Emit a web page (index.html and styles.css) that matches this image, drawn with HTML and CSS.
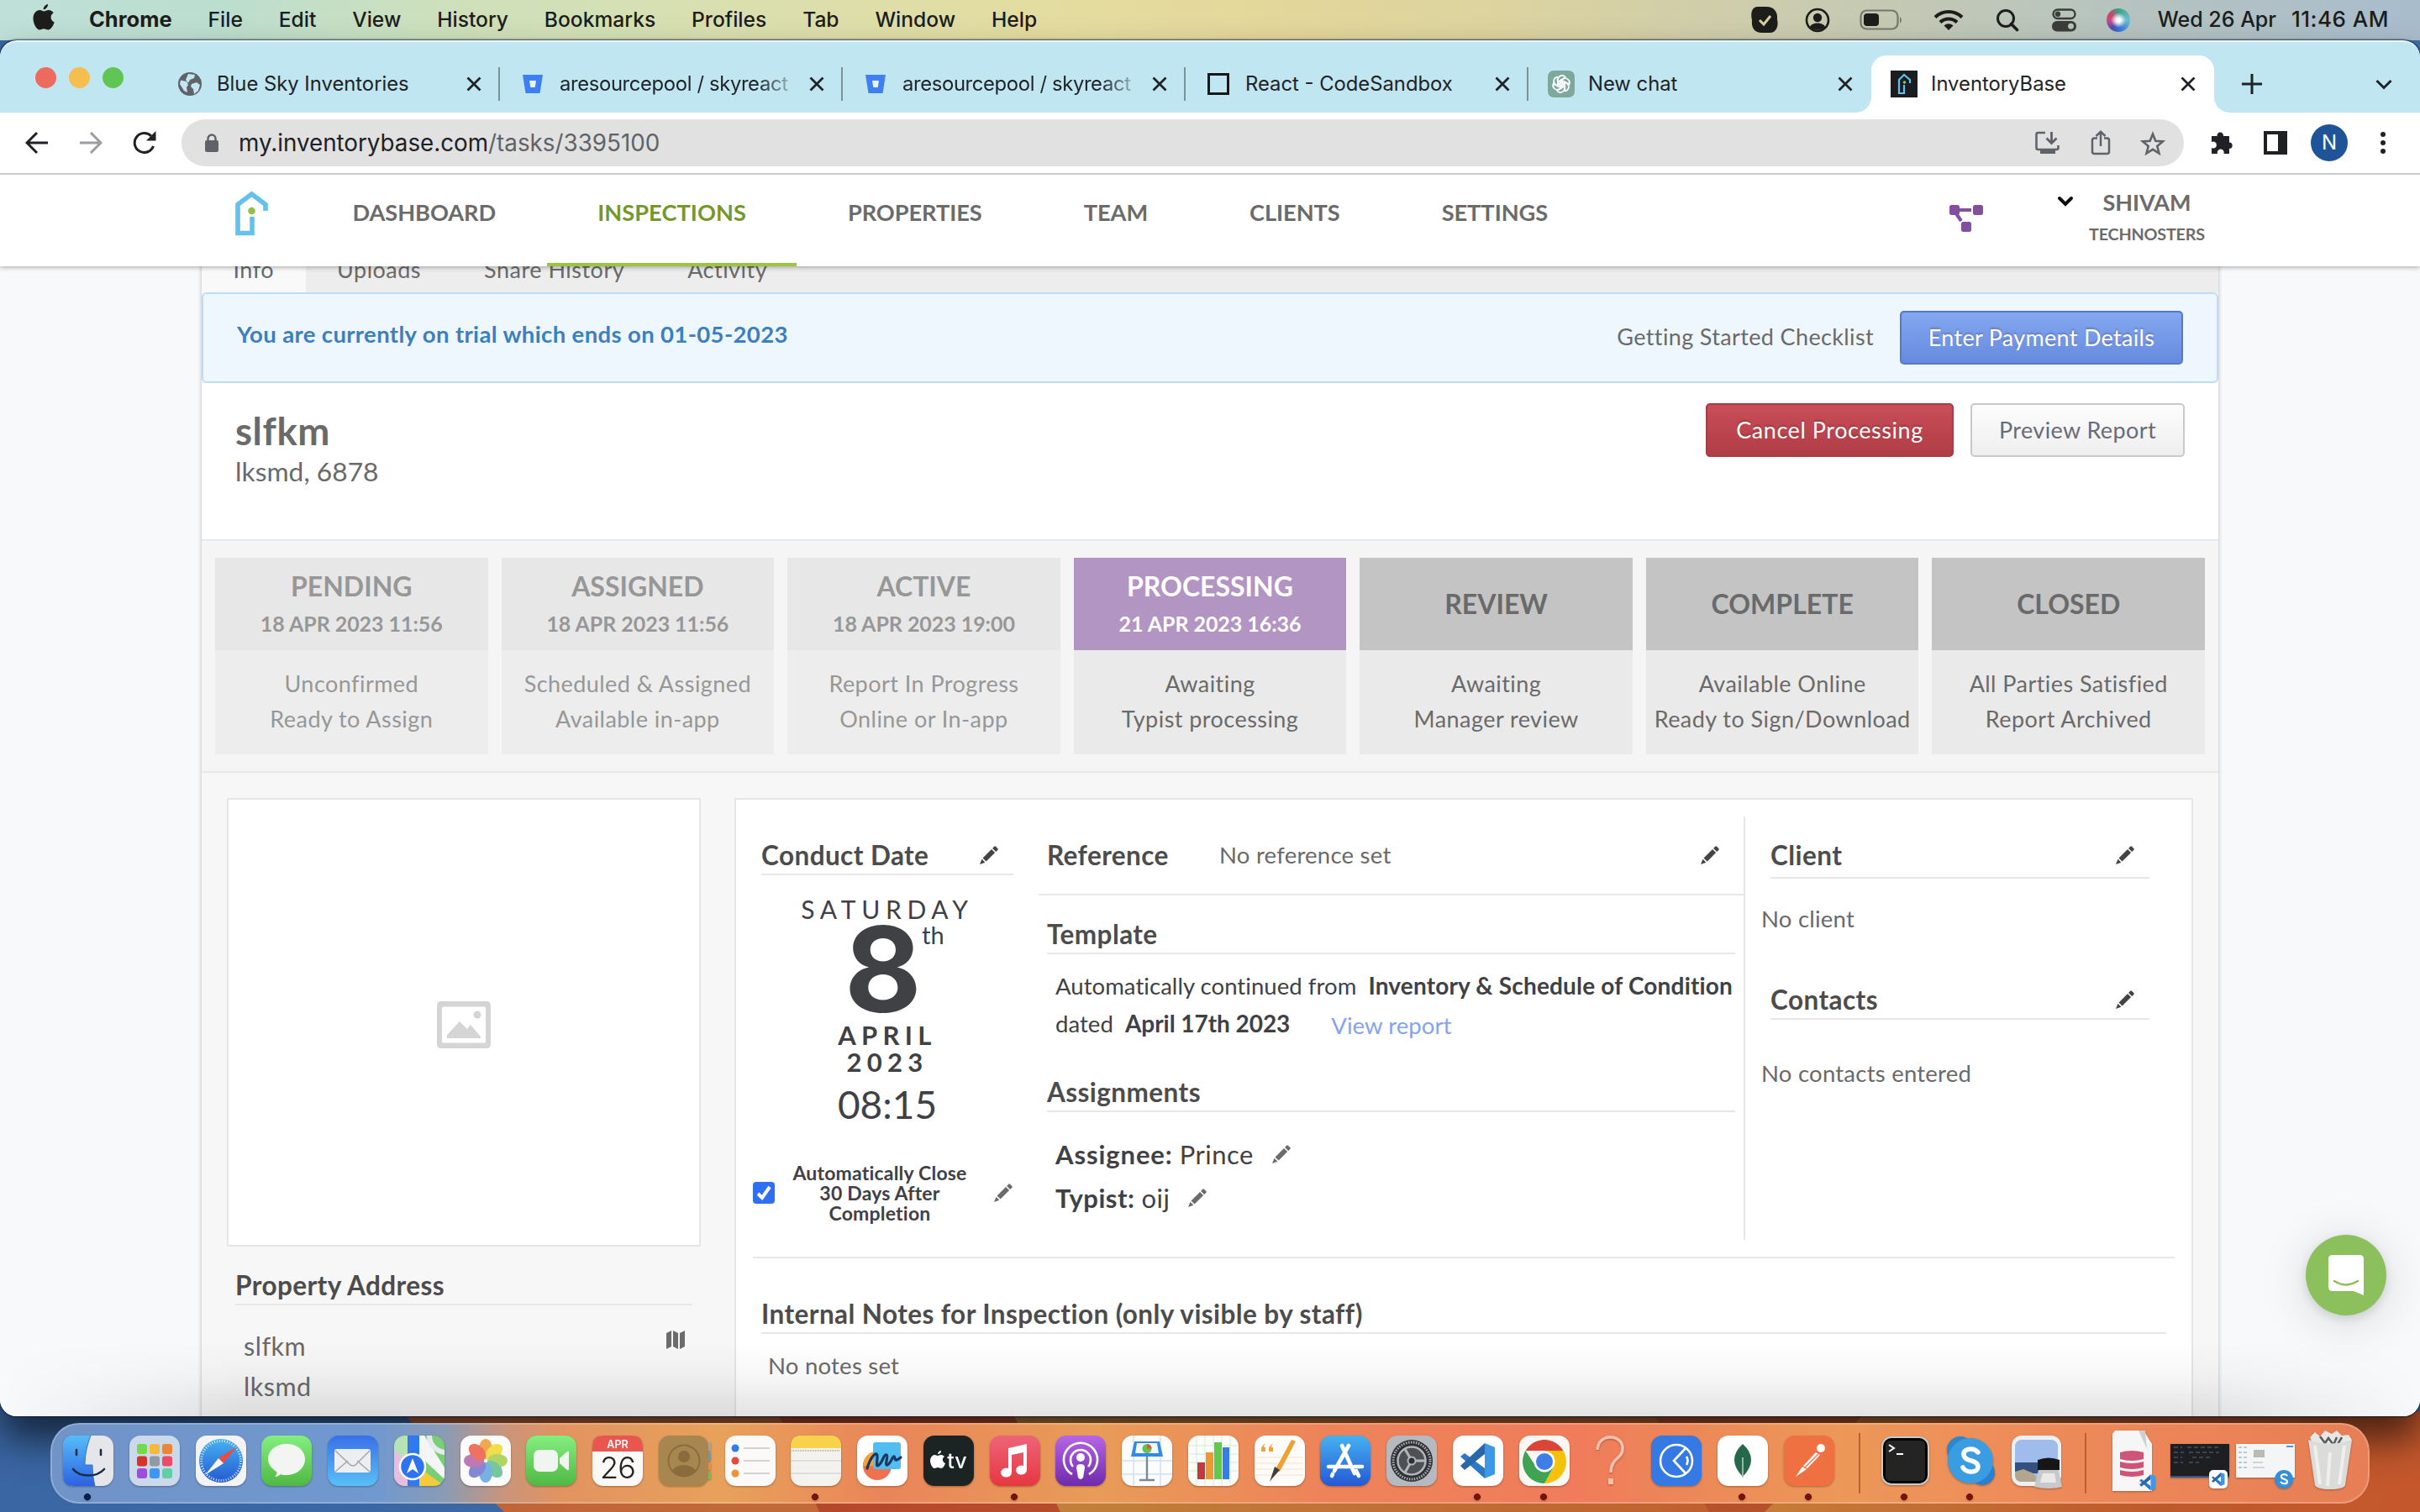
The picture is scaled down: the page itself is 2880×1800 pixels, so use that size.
FILE: index.html
```html
<!DOCTYPE html>
<html lang="en">
<head>
<meta charset="utf-8">
<title>InventoryBase</title>
<link rel="stylesheet" href="styles.css">
</head>
<body>
<svg class="wallpaper" viewBox="0 0 2880 1800" preserveAspectRatio="none">
  <defs>
    <linearGradient id="w1"><stop offset="0" stop-color="#c06338"/><stop offset="1" stop-color="#c88a3e"/></linearGradient>
    <linearGradient id="w2"><stop offset="0" stop-color="#b5472a"/><stop offset="1" stop-color="#bf6430"/></linearGradient>
    <linearGradient id="w3"><stop offset="0" stop-color="#c1823c"/><stop offset=".6" stop-color="#bf5a2c"/><stop offset="1" stop-color="#b03a22"/></linearGradient>
    <linearGradient id="w4"><stop offset="0" stop-color="#c67c39"/><stop offset=".6" stop-color="#bd5a2c"/><stop offset="1" stop-color="#c4582c"/></linearGradient>
    <linearGradient id="wb"><stop offset="0" stop-color="#3a66a3"/><stop offset="1" stop-color="#4170a6"/></linearGradient>
  </defs>
  <rect width="2880" height="1800" fill="url(#wb)"/>
  <rect x="635" width="1600" height="60" fill="#d19a45"/>
  <path d="M480 1680L490 1694L600 1800H2880V1680z" fill="url(#w1)"/>
  <path d="M925 1680L975 1800H2880V1680z" fill="url(#w2)"/>
  <path d="M1204 1680L1262 1800H2880V1680z" fill="url(#w3)"/>
  <path d="M1966 1680L2034 1800H2880V1680z" fill="#b5512b"/>
  <path d="M2222 1680L2100 1800H2880V1680z" fill="url(#w4)"/>
</svg>

<header class="menubar">
  <svg class="apple" width="28" height="32" viewBox="0 0 28 32"><path d="M19 0c.3 3-2.400 6.300-5.300 6.300C13.300 3.500 16 .4 19 0z" /><path d="M14.300 8.600c1.300 0 3-1.500 5.700-1.500 2.300 0 4.500 1.300 5.700 3.200-4.600 2.700-3.900 9.200 1 11.200-1.400 4.200-4.400 9-7.300 9-2 0-2.700-1.300-5.200-1.300s-3.300 1.300-5.200 1.300C5.800 30.500 1.500 23.500 1.500 17c0-6.200 3.900-9.900 7.700-9.900 2.400 0 3.900 1.500 5.100 1.500z"/></svg>
  <nav class="menu"><b>Chrome</b><span>File</span><span>Edit</span><span>View</span><span>History</span><span>Bookmarks</span><span>Profiles</span><span>Tab</span><span>Window</span><span>Help</span></nav>
  <div class="status">
    <svg width="34" height="34" viewBox="0 0 34 34"><path d="M9 1h10c9 0 14 6 13 15 2 8-1 16-9 16H14C5 32 1 26 2 17 0 8 2 1 9 1z"/><path d="M11 17l5 5 8-10" fill="none" stroke="#d6d0a4" stroke-width="3"/></svg>
    <svg width="30" height="30" viewBox="0 0 30 30"><circle cx="15" cy="15" r="13" fill="none" stroke="#1d1d18" stroke-width="2.600"/><circle cx="15" cy="12" r="5.200"/><path d="M6 23c2-6 16-6 18 0-4 5-14 5-18 0z"/></svg>
    <svg width="52" height="26" viewBox="0 0 52 26"><rect x="1.500" y="1.500" width="44" height="22" rx="7" fill="none" stroke="#77776a" stroke-width="2.200"/><rect x="5" y="5" width="18" height="15" rx="4"/><path d="M48 9q4 3.500 0 8z" fill="#77776a"/></svg>
    <svg width="36" height="26" viewBox="0 0 36 26"><g fill="none" stroke="#1d1d1b" stroke-width="4.200"><path d="M2 9.500a23 23 0 0 1 32 0"/><path d="M8 15.500a14.500 14.500 0 0 1 20 0"/></g><path d="M18 25l-5.500-5.500a8 8 0 0 1 11 0z"/></svg>
    <svg width="28" height="28" viewBox="0 0 28 28"><g fill="none" stroke="#1d1d1b" stroke-width="3"><circle cx="12" cy="12" r="9.500"/><path d="M18.500 18.500l7 7" stroke-width="3.600" stroke-linecap="round"/></g></svg>
    <svg width="30" height="28" viewBox="0 0 30 28"><rect x="1.500" y="1.500" width="26" height="10.500" rx="5.200" fill="none" stroke="#3b3d39" stroke-width="2.400"/><circle cx="7" cy="6.800" r="3.200" fill="#3b3d39"/><rect x="0" y="15" width="29" height="12.500" rx="6" fill="#3b3d39"/><circle cx="22.500" cy="21.200" r="3.400" fill="#b8c3bb"/></svg>
    <i class="siri"></i>
    <span class="day">Wed 26 Apr</span><span class="clock">11:46 AM</span>
  </div>
</header>

<main class="window">
  <div class="tabstrip">
    <div class="lights"><i class="red"></i><i class="amber"></i><i class="green"></i></div>
    <div class="tab"><svg width="28" height="28" viewBox="0 0 28 28"><circle cx="14" cy="14" r="14" fill="#5f6368"/><path d="M3 9.500l7 1.500 2 4-2 3 1 6-4-2-5-8zM12 2l8 1-1 4-5 2-2 4-3-4zM16 14l6-2 4 3-2 7-5 4-1-6-3-3z" fill="#c3e7f1"/></svg><span>Blue Sky Inventories</span><svg class="x"><use href="#x"/></svg></div>
    <div class="tab"><svg width="26" height="24" viewBox="0 0 26 24"><path d="M1 1h24l-3.500 22h-17z" fill="#3e80f0"/><path d="M9 8h8l-1.300 8h-5.400z" fill="#e9f3fd"/></svg><span class="fade">aresourcepool / skyreact</span><svg class="x"><use href="#x"/></svg></div>
    <div class="tab"><svg width="26" height="24" viewBox="0 0 26 24"><path d="M1 1h24l-3.500 22h-17z" fill="#3e80f0"/><path d="M9 8h8l-1.300 8h-5.400z" fill="#e9f3fd"/></svg><span class="fade">aresourcepool / skyreact</span><svg class="x"><use href="#x"/></svg></div>
    <div class="tab"><svg width="26" height="26" viewBox="0 0 26 26"><rect x="1.500" y="1.500" width="23" height="23" fill="none" stroke="#15181b" stroke-width="3"/></svg><span>React - CodeSandbox</span><svg class="x"><use href="#x"/></svg></div>
    <div class="tab"><svg width="32" height="32" viewBox="0 0 32 32"><rect width="32" height="32" rx="7" fill="#7da99a"/><g fill="none" stroke="#fff" stroke-width="1.700" stroke-linejoin="round"><path id="petal" d="M12 19V10.500a5 5 0 0 1 9-2.500L14.500 12v6"/><use href="#petal" transform="rotate(60 16 16)"/><use href="#petal" transform="rotate(120 16 16)"/><use href="#petal" transform="rotate(180 16 16)"/><use href="#petal" transform="rotate(240 16 16)"/><use href="#petal" transform="rotate(300 16 16)"/></g></svg><span>New chat</span><svg class="x"><use href="#x"/></svg></div>
    <div class="tab active"><svg width="32" height="32" viewBox="0 0 32 32"><rect width="32" height="32" fill="#1b1d20"/><path d="M23 15v-4l-7-6-6 6v16h6V17" fill="none" stroke="#5dc0f0" stroke-width="2.200"/><circle cx="16.500" cy="14" r="1.800" fill="#9c3"/></svg><span>InventoryBase</span><svg class="x"><use href="#x"/></svg></div>
    <svg class="plus" width="24" height="24" viewBox="0 0 24 24"><path d="M12 0v24M0 12h24" stroke="#1f2327" stroke-width="3"/></svg>
    <svg class="more" width="20" height="14" viewBox="0 0 20 14"><path d="M1.500 2l8.500 8.500L18.500 2" fill="none" stroke="#1f2327" stroke-width="3"/></svg>
  </div>

  <div class="toolbar">
    <svg width="28" height="28" viewBox="0 0 28 28"><path d="M27 14H3M14 2L2 14l12 12" fill="none" stroke="#202124" stroke-width="3"/></svg>
    <svg width="28" height="28" viewBox="0 0 28 28"><path d="M1 14h24M14 2l12 12-12 12" fill="none" stroke="#9a9c9f" stroke-width="3"/></svg>
    <svg width="28" height="28" viewBox="0 0 28 28"><path d="M24.500 18A11.500 11.500 0 1 1 22 6" fill="none" stroke="#202124" stroke-width="3"/><path d="M27.500 0v11.500H16z" fill="#202124"/></svg>
    <div class="omnibox">
      <svg width="18" height="22" viewBox="0 0 18 22"><rect x="1" y="8" width="16" height="14" rx="2" fill="#5f6368"/><path d="M4.500 9V6a4.500 4.500 0 0 1 9 0v3" fill="none" stroke="#5f6368" stroke-width="2.400"/></svg>
      <p><span class="host">my.inventorybase.com</span><span class="path">/tasks/3395100</span></p>
      <div class="actions">
        <svg width="30" height="28" viewBox="0 0 30 28"><path d="M12 2H3.500Q1.500 2 1.500 4v16q0 2 2 2h22q2 0 2-2v-3" fill="none" stroke="#5f6368" stroke-width="2.600"/><path d="M19.500 1v13M13.500 8.500l6 6 6-6" fill="none" stroke="#5f6368" stroke-width="2.800"/><path d="M6 22h18v5H6z" fill="#5f6368"/></svg>
        <svg width="24" height="30" viewBox="0 0 24 30"><path d="M8 9.500H4.500q-2.500 0-2.500 2.500v13.500Q2 28 4.500 28h15q2.500 0 2.500-2.500V12q0-2.500-2.500-2.500H16M12 19V2M6.500 7L12 1.800 17.500 7" fill="none" stroke="#5f6368" stroke-width="2.500"/></svg>
        <svg width="30" height="29" viewBox="0 0 30 29"><path d="M15 3.500l3.300 8.300 8.700.6-6.700 5.600 2.200 8.500L15 21.800l-7.500 4.700L9.700 18 3 12.400l8.700-.6z" fill="none" stroke="#5f6368" stroke-width="2.600"/></svg>
      </div>
    </div>
    <svg width="30" height="30" viewBox="0 0 30 30"><path d="M3 7h6.500a3.800 3.800 0 1 1 7.500 0H24v7.500a3.600 3.600 0 1 1 0 7.300V28h-6.500a4 4 0 1 0-7.500 0H3v-7a4 4 0 1 0 0-7z" fill="#202124"/></svg>
    <svg width="28" height="28" viewBox="0 0 28 28"><path fill-rule="evenodd" d="M0 0h28v28H0zM4 4v20h13V4z" fill="#202124"/></svg>
    <span class="avatar">N</span>
    <svg width="8" height="28" viewBox="0 0 8 28"><g fill="#202124"><circle cx="4" cy="4" r="3"/><circle cx="4" cy="14" r="3"/><circle cx="4" cy="24" r="3"/></g></svg>
  </div>

  <div class="app">
    <div class="topnav">
      <svg class="logo" width="40" height="54" viewBox="0 0 40 54"><path d="M36 24V16.500L19.500 4 3 16.500V50.500H20V31" fill="none" stroke="#66c1ea" stroke-width="5.600"/><circle cx="19.500" cy="24" r="4.300" fill="#94c03d"/></svg>
      <nav><a>DASHBOARD</a><a class="on">INSPECTIONS</a><a>PROPERTIES</a><a>TEAM</a><a>CLIENTS</a><a>SETTINGS</a></nav>
      <svg class="flow" width="40" height="32" viewBox="0 0 40 32"><g fill="#844fa0"><rect width="12" height="12" rx="2.500"/><rect x="28" width="12" height="12" rx="2.500"/><rect x="14" y="20" width="12" height="12" rx="2.500"/></g><path d="M11 6h15M8.500 11l5.500 8" stroke="#844fa0" stroke-width="4"/></svg>
      <svg class="caret" width="20" height="14" viewBox="0 0 20 14"><path d="M3 3l7 7 7-7" fill="none" stroke="#0c0c0c" stroke-width="4" stroke-linecap="round"/></svg>
      <div class="user"><b>SHIVAM</b><span>TECHNOSTERS</span></div>
    </div>

    <div class="sheet">
      <div class="subtabs"><a class="on">Info</a><a>Uploads</a><a>Share History</a><a>Activity</a></div>
      <div class="trial"><b>You are currently on trial which ends on 01-05-2023</b><span>Getting Started Checklist</span><a class="btn blue">Enter Payment Details</a></div>
      <div class="title">
        <div><h1>slfkm</h1><p>lksmd, 6878</p></div>
        <a class="btn danger">Cancel Processing</a><a class="btn plain">Preview Report</a>
      </div>
      <div class="steps">
        <div class="step done"><h3>PENDING<small>18 APR 2023 11:56</small></h3><p>Unconfirmed<br>Ready to Assign</p></div>
        <div class="step done"><h3>ASSIGNED<small>18 APR 2023 11:56</small></h3><p>Scheduled &amp; Assigned<br>Available in-app</p></div>
        <div class="step done"><h3>ACTIVE<small>18 APR 2023 19:00</small></h3><p>Report In Progress<br>Online or In-app</p></div>
        <div class="step now"><h3>PROCESSING<small>21 APR 2023 16:36</small></h3><p>Awaiting<br>Typist processing</p></div>
        <div class="step"><h3>REVIEW</h3><p>Awaiting<br>Manager review</p></div>
        <div class="step"><h3>COMPLETE</h3><p>Available Online<br>Ready to Sign/Download</p></div>
        <div class="step"><h3>CLOSED</h3><p>All Parties Satisfied<br>Report Archived</p></div>
      </div>

      <div class="content">
        <aside>
          <div class="photo"><svg width="64" height="56" viewBox="0 0 64 56"><path fill-rule="evenodd" fill="#d5d5d5" d="M5 0h54q5 0 5 5v46q0 5-5 5H5q-5 0-5-5V5q0-5 5-5zM7.500 6.500q-1.500 0-1.500 1.500v40q0 1.500 1.500 1.500h49q1.500 0 1.500-1.500V8q0-1.500-1.500-1.500z"/><circle cx="48" cy="16" r="4.500" fill="#d5d5d5"/><path d="M12 44v-4l15-16 9 9 4-5 12 14v2z" fill="#d5d5d5"/></svg></div>
          <div class="address"><h2>Property Address</h2>
            <div class="lines"><p>slfkm<br>lksmd</p><svg width="22" height="22" viewBox="0 0 22 22"><path d="M0 3l6-3v19l-6 3zM8 0l6 3v19l-6-3zM16 3l6-3v19l-6 3z" fill="#6b6b6b"/></svg></div>
          </div>
        </aside>
        <section class="panel">
          <div class="cols">
            <div class="when">
              <h2>Conduct Date <svg class="pen"><use href="#pen"/></svg></h2>
              <div class="date"><span class="wd">SATURDAY</span><span class="dd">8<sup>th</sup></span><span class="mm">APRIL</span><span class="mm">2023</span><span class="tt">08:15</span></div>
              <div class="auto"><i class="check"><svg width="26" height="26" viewBox="0 0 26 26"><path d="M6 14l5 5 9-13" fill="none" stroke="#fff" stroke-width="4"/></svg></i><p>Automatically Close<br>30 Days After<br>Completion</p><svg class="pen soft"><use href="#pen"/></svg></div>
            </div>
            <div class="what">
              <div class="ref"><h2>Reference</h2><p>No reference set</p><svg class="pen"><use href="#pen"/></svg></div>
              <div class="inner">
                <h2 class="tpl">Template</h2>
                <p class="para">Automatically continued from <b class="inv">Inventory &amp; Schedule of Condition</b><br>dated <b class="apr">April 17th 2023</b><a>View report</a></p>
                <h2>Assignments</h2>
                <div class="people"><p><b class="as">Assignee:</b> Prince <svg class="pen mid"><use href="#pen"/></svg></p><p><b>Typist:</b> oij <svg class="pen mid"><use href="#pen"/></svg></p></div>
              </div>
            </div>
            <div class="who">
              <h2 class="cl">Client <svg class="pen"><use href="#pen"/></svg></h2><p class="cp">No client</p>
              <h2>Contacts <svg class="pen"><use href="#pen"/></svg></h2><p class="kp">No contacts entered</p>
            </div>
          </div>
          <div class="notes"><h2>Internal Notes for Inspection (only visible by staff)</h2><p>No notes set</p></div>
        </section>
      </div>
    </div>
    <div class="shade"></div>
    <div class="chat"><svg width="42" height="48" viewBox="0 0 42 48"><path d="M5 0h32q5 0 5 5v43l-12-5H5q-5 0-5-5V5q0-5 5-5z" fill="#fff"/><path d="M7 31q14 9 28 0" fill="none" stroke="#8cc05d" stroke-width="2.600" stroke-linecap="round"/></svg></div>
  </div>
</main>

<footer class="dock">
  <svg class="run" viewBox="0 0 60 60"><rect width="60" height="60" rx="13" fill="#e4e6ea"/><path d="M13 0h20c-4 10-7 22-7 35h9c0 9 1 17 3 25H13Q0 60 0 47V13Q0 0 13 0z" fill="url(#fb)"/><path d="M33 0c-4 10-7 22-7 35h9c0 9 1 17 3 25" fill="none" stroke="#3a6fb8" stroke-width="1"/><path d="M16 17v6M45 17v6M12 40c8 10 28 10 37 0" fill="none" stroke="#1c2b44" stroke-width="2.600" stroke-linecap="round"/></svg>
  <svg viewBox="0 0 60 60"><rect width="60" height="60" rx="13" fill="#ccd9ea"/><g><rect x="9" y="10" width="12" height="12" rx="3" fill="#72d84c"/><rect x="24" y="10" width="12" height="12" rx="3" fill="#f6b93c"/><rect x="39" y="10" width="12" height="12" rx="3" fill="#ec8632"/><rect x="9" y="24.500" width="12" height="12" rx="3" fill="#d5332c"/><rect x="24" y="24.500" width="12" height="12" rx="3" fill="#8f9aa4"/><rect x="39" y="24.500" width="12" height="12" rx="3" fill="#ef4a63"/><rect x="9" y="39" width="12" height="12" rx="3" fill="#9b4ee0"/><rect x="24" y="39" width="12" height="12" rx="3" fill="#3b97f3"/><rect x="39" y="39" width="12" height="12" rx="3" fill="#5fcfa6"/></g></svg>
  <svg viewBox="0 0 60 60"><rect width="60" height="60" rx="13" fill="#f3f3f3"/><circle cx="30" cy="30" r="26" fill="url(#bl)"/><circle cx="30" cy="30" r="23.500" fill="none" stroke="#d8ecfb" stroke-width="3" stroke-dasharray="1 2"/><path d="M49 13L27 27l6 6z" fill="#ef4a3c"/><path d="M11 47l16-20 6 6z" fill="#f4f6f8"/></svg>
  <svg viewBox="0 0 60 60"><rect width="60" height="60" rx="13" fill="url(#gr)"/><path d="M30 10c13 0 22 8 22 18s-9 19-22 19c-3 0-5 0-7-1-2 2-4 3-7 3 2-2 3-4 2-6-6-4-10-9-10-15 0-10 9-18 22-18z" fill="#f2f5f1"/></svg>
  <svg viewBox="0 0 60 60"><rect width="60" height="60" rx="13" fill="url(#ml)"/><rect x="8" y="16" width="43" height="28" rx="3" fill="#eceff2"/><path d="M9 18l18 17q3 2 6 0l17-17M9 43l15-13M50 43L35 30" fill="none" stroke="#a5a9ad" stroke-width="1.600"/></svg>
  <svg viewBox="0 0 60 60"><clipPath id="mc"><rect width="60" height="60" rx="13"/></clipPath><g clip-path="url(#mc)"><rect width="60" height="60" fill="#79cf73"/><path d="M0 18l16 10v32H0z" fill="#dc86cb"/><path d="M30 0h6l24 38v14L28 22z" fill="#f4f6f5"/><path d="M0 0h16v60H0z" fill="#f4f6f5" opacity=".5"/><path d="M30 38l30 22H30z" fill="#f5ca3c"/><path d="M16 0h14v60H16z" fill="#2f7af0"/><circle cx="62" cy="0" r="20" fill="none" stroke="#e7e9ee" stroke-width="6"/></g><circle cx="22" cy="37" r="15" fill="#2d74ee" stroke="#fff" stroke-width="2.500"/><path d="M22 27l7 18-7-5-7 5z" fill="#fff"/></svg>
  <svg viewBox="0 0 60 60"><rect width="60" height="60" rx="13" fill="#fbfbfb"/><g opacity=".85"><ellipse cx="30" cy="16" rx="8" ry="12" fill="#f39a2e"/><ellipse cx="30" cy="16" rx="8" ry="12" fill="#efd92f" transform="rotate(45 30 30)"/><ellipse cx="30" cy="16" rx="8" ry="12" fill="#a5cf4a" transform="rotate(90 30 30)"/><ellipse cx="30" cy="16" rx="8" ry="12" fill="#5fbf8d" transform="rotate(135 30 30)"/><ellipse cx="30" cy="16" rx="8" ry="12" fill="#63a5e2" transform="rotate(180 30 30)"/><ellipse cx="30" cy="16" rx="8" ry="12" fill="#6f74cb" transform="rotate(225 30 30)"/><ellipse cx="30" cy="16" rx="8" ry="12" fill="#b263a8" transform="rotate(270 30 30)"/><ellipse cx="30" cy="16" rx="8" ry="12" fill="#ec5a48" transform="rotate(315 30 30)"/></g></svg>
  <svg viewBox="0 0 60 60"><rect width="60" height="60" rx="13" fill="url(#gr)"/><rect x="9" y="17" width="29" height="26" rx="7" fill="#f1f5ef"/><path d="M40 27l9-8q2-1 2 1v20q0 2-2 1l-9-8z" fill="#f1f5ef"/></svg>
  <svg viewBox="0 0 60 60"><rect width="60" height="60" rx="13" fill="#faf9f8"/><path d="M0 19v-6Q0 0 13 0h34q13 0 13 13v6z" fill="#e8564f"/><text x="30" y="15" class="cal1">APR</text><text x="30" y="51" class="cal2">26</text></svg>
  <svg viewBox="0 0 60 60"><path d="M50 8h12v10H50z" fill="#9aa5ad"/><path d="M50 20h12v10H50z" fill="#4da2d8"/><path d="M50 32h12v9H50z" fill="#ef8b34"/><path d="M50 43h12v9H50z" fill="#62c554"/><rect width="59" height="60" rx="13" fill="#a88650"/><circle cx="30" cy="30" r="18.500" fill="none" stroke="#8a6b3b" stroke-width="1.800"/><circle cx="30" cy="25" r="7" fill="#8a6b3b"/><path d="M16 42c4-9 24-9 28 0-7 9-21 9-28 0z" fill="#8a6b3b"/></svg>
  <svg viewBox="0 0 60 60"><rect width="60" height="60" rx="13" fill="#fbfaf9"/><path d="M22 15h31M22 30h31M22 45h31" stroke="#c6c6ca" stroke-width="1.600"/><circle cx="12" cy="15" r="4.500" fill="#2f7cf0"/><circle cx="12" cy="30" r="4.500" fill="#e6483c"/><circle cx="12" cy="45" r="4.500" fill="#ee9430"/></svg>
  <svg class="run" viewBox="0 0 60 60"><rect width="60" height="60" rx="13" fill="#f3f2ef"/><path d="M0 15v-2Q0 0 13 0h34q13 0 13 13v2z" fill="#f9d24b"/><path d="M1 18h58" stroke="#b8b5ac" stroke-width="2" stroke-dasharray="1 1"/><path d="M0 30h60M0 45h60" stroke="#d9d8d4" stroke-width="1.600"/></svg>
  <svg viewBox="0 0 60 60"><rect width="60" height="60" rx="13" fill="#fff"/><circle cx="24" cy="36" r="17" fill="#f0714f"/><path d="M7 36a17 17 0 0 1 14-17v17z" fill="#f4a23c"/><rect x="19" y="8" width="33" height="32" rx="3" fill="#52bdf0"/><path d="M12 39c4-14 12-22 12-14s-2 13 2 10 6-13 9-12-3 13 1 12 6-11 8-10-1 8 8 1" fill="none" stroke="#173a63" stroke-width="3.200" stroke-linecap="round"/></svg>
  <svg viewBox="0 0 60 60"><rect width="60" height="60" rx="13" fill="#1b2323"/><path d="M21 18c0 3-2 4-4 4 0-2 2-4 4-4zM17 24c1 0 2-1 4-1s3 1 4 2c-3 2-3 6 1 8-1 3-3 6-5 6-1 0-2-1-4-1s-2 1-4 1c-2 0-5-5-5-9s3-7 5-7 3 1 4 1z" fill="#fff"/><text x="40" y="39" class="tv">tv</text></svg>
  <svg class="run" viewBox="0 0 60 60"><rect width="60" height="60" rx="13" fill="url(#mu)"/><path d="M22 15l22-5v31a6.500 5.500 0 1 1-4-5V20l-14 3v21a6.500 5.500 0 1 1-4-5z" fill="#fff"/></svg>
  <svg viewBox="0 0 60 60"><rect width="60" height="60" rx="13" fill="url(#po)"/><g fill="none" stroke="#fff" stroke-width="2.600"><path d="M20 46a20 20 0 1 1 20 0"/><path d="M21 37a12 12 0 1 1 18 0"/></g><circle cx="30" cy="26" r="5" fill="#fff"/><path d="M25 38q0-4 5-4t5 4l-2 12q-3 4-6 0z" fill="#fff"/></svg>
  <svg viewBox="0 0 60 60"><rect width="60" height="60" rx="13" fill="#fcfcfd"/><path d="M14 0v60M46 0v60M0 30h60M0 46h60" stroke="#cfe0f4" stroke-width="1.400"/><path d="M15 7h30l4 18H11z" fill="#2f8be6"/><path d="M18 9h24l2 12H16z" fill="#f2f7fc"/><circle cx="30" cy="15.500" r="5.500" fill="#6cbf4b"/><path d="M30 10a5.500 5.500 0 0 1 5.500 5.500H30z" fill="#e4553e"/><path d="M30 25v27M21 53h18" stroke="#7c8a97" stroke-width="2.400"/></svg>
  <svg viewBox="0 0 60 60"><rect width="60" height="60" rx="13" fill="#fbfdfa"/><path d="M10 0v60M20 0v60M30 0v60M40 0v60M50 0v60M0 12h60M0 22h60M0 32h60M0 42h60" stroke="#d3ecd0"/><path d="M11 32h9v20h-9z" fill="#c23a3e"/><path d="M21 20h9v32h-9z" fill="#ee9830"/><path d="M31 8h9v44h-9z" fill="#62c94b"/><path d="M41 14h8v38h-8z" fill="#357eea"/></svg>
  <svg viewBox="0 0 60 60"><rect width="60" height="60" rx="13" fill="#fdfcfa"/><path d="M2 26h56M2 33h56M2 40h56M2 47h56" stroke="#f8e0c2" stroke-width="1.200"/><path d="M13 9q-6 4-5 10h5v-5h-2q0-3 2-5zM22 9q-6 4-5 10h5v-5h-2q0-3 2-5z" fill="#eea23b"/><path d="M44 5l5 2-19 36-5-3z" fill="#efa033"/><path d="M24 37l6 4-9 10-3 4z" fill="#3d3d42"/></svg>
  <svg viewBox="0 0 60 60"><rect width="60" height="60" rx="13" fill="url(#bl)"/><path d="M26 12l15 33M34 12L17 42M15 46l-1 2M10 37h25M41 37h9M43 42l3 6" fill="none" stroke="#fff" stroke-width="4.600" stroke-linecap="round"/></svg>
  <svg viewBox="0 0 60 60"><rect width="60" height="60" rx="13" fill="#b4bac0"/><circle cx="30" cy="30" r="25" fill="#2e3033"/><circle cx="30" cy="30" r="22" fill="none" stroke="#aeb1b4" stroke-width="3" stroke-dasharray="1.500 1.500"/><circle cx="30" cy="30" r="16.500" fill="#4d5054" stroke="#b4b7ba" stroke-width="2.500"/><path d="M30 30h16M30 30l-8 14M30 30l-8-14" stroke="#b4b7ba" stroke-width="3"/><circle cx="30" cy="30" r="4.500" fill="#2e3033" stroke="#b4b7ba" stroke-width="2"/></svg>
  <svg class="run" viewBox="0 0 60 60"><rect width="60" height="60" rx="13" fill="#fff"/><use href="#code"/></svg>
  <svg class="run" viewBox="0 0 60 60"><rect width="60" height="60" rx="13" fill="#fbf7f5"/><g transform="translate(0 1)"><path d="M7.500 17A26 26 0 0 1 52.500 17H30z" fill="#db4437"/><path d="M52.500 17A26 26 0 0 1 30 56L41 36 41 23 30 17z" fill="#f4c20d"/><path d="M7.500 17A26 26 0 0 0 30 56l11-20H20z" fill="#3fa353"/><circle cx="30" cy="30" r="12.500" fill="#fff"/><circle cx="30" cy="30" r="10" fill="#3f7ee8"/></g></svg>
  <svg viewBox="0 0 60 60"><path d="M15 17C16-4 46-2 45 16c0 12-14 10-14 28" fill="none" stroke="#f3c0ae" stroke-width="3.600"/><rect x="28" y="51" width="6" height="7" fill="#f3c0ae"/></svg>
  <svg viewBox="0 0 60 60"><rect width="60" height="60" rx="13" fill="#3579e4"/><circle cx="30" cy="30" r="19" fill="none" stroke="#fff" stroke-width="2.600"/><path d="M41 15L27 30l14 15M42 25q3 5 0 10" fill="none" stroke="#fff" stroke-width="2.600"/></svg>
  <svg class="run" viewBox="0 0 60 60"><rect width="60" height="60" rx="13" fill="#fff"/><path d="M30 10q20 18 0 39-20-21 0-39z" fill="#24694b"/><path d="M30 26v24" stroke="#b9c6b4" stroke-width="1.600"/></svg>
  <svg class="run" viewBox="0 0 60 60"><rect width="60" height="60" rx="13" fill="#ef7041"/><circle cx="44" cy="15" r="5" fill="#fff"/><path d="M38 20l5 3-15 16-5-3zM22 37l5 3-13 9z" fill="#fff"/><path d="M41 22L25 38" stroke="#ef7041" stroke-width="1.200"/></svg>
  <i class="sep s1"></i>
  <svg class="run" viewBox="0 0 60 60"><rect x="2" y="1" width="57" height="58" rx="12" fill="#c5cdd0"/><rect x="4" y="3" width="53" height="54" rx="10" fill="#000"/><rect x="7" y="6" width="47" height="48" rx="5" fill="#242424"/><path d="M11 11l6 4-6 4M20 22h8" fill="none" stroke="#fff" stroke-width="2"/></svg>
  <svg class="run" viewBox="0 0 60 60"><circle cx="18" cy="17" r="16" fill="#2d87cf"/><circle cx="44" cy="44" r="15" fill="#2b7fd0"/><circle cx="30" cy="30" r="27" fill="#3a9de2"/><path d="M39 20c-5-6-18-5-17 3 1 9 17 5 17 14 0 8-14 8-18 1" fill="none" stroke="#fff" stroke-width="5.500" stroke-linecap="round"/></svg>
  <svg viewBox="0 0 60 60"><rect width="59" height="60" rx="12" fill="#eef1f3"/><rect x="4" y="5" width="51" height="50" rx="8" fill="#9fbcec"/><path d="M4 32h51v13H4z" fill="#34517e"/><path d="M4 43l10-3 12 5 6 10H12q-8 0-8-8z" fill="#b3a68f"/><path d="M31 29q13-5 26 0v12H31z" fill="#161616"/><path d="M32 41h24l4 20q-15 4-33 0z" fill="#c8c9ca"/><path d="M37 45h14l2 11H34z" fill="#e9e9e7"/></svg>
  <i class="sep s2"></i>
  <svg viewBox="0 0 60 60"><path d="M3-2V66H50V10L40-6H6z" fill="#f6f6f6"/><path d="M34-6h8l2 22z" fill="#cfcfd0"/><g fill="#cf5578"><path d="M12 20q14-4 28 0v8q-14 4-28 0zM12 31q14 4 28 0v7q-14 4-28 0zM12 41q14 4 28 0v6q-14 4-28 0z"/></g><g transform="translate(31 42) scale(.46)"><use href="#code"/></g></svg>
  <svg class="thumb t1" viewBox="0 0 70 60"><rect y="10" width="70" height="40" fill="#1e1f22"/><path d="M4 14h10M4 20h12M4 26h10M4 32h11M20 14h40M22 20h36M26 26h22M22 32h12" stroke="#46515c" stroke-width="1.600" stroke-dasharray="5 3"/><path d="M0 49h70" stroke="#2a5b8c" stroke-width="2"/><rect x="46" y="41" width="22" height="22" rx="5" fill="#fff"/><g transform="translate(45.500 40.500) scale(.38)"><use href="#code"/></g></svg>
  <svg class="thumb t2" viewBox="0 0 70 60"><rect y="10" width="70" height="40" fill="#f4f5f6"/><path d="M3 14h10M3 20h12M3 26h10M3 32h12M3 38h10" stroke="#b9cad6" stroke-width="1.800" stroke-dasharray="4 2"/><rect x="21" y="17" width="13" height="9" fill="#bcbab5"/><path d="M20 32h12M20 38h14" stroke="#d3d3d3" stroke-width="2"/><path d="M60 13h8" stroke="#4a95e6" stroke-width="2"/><circle cx="57" cy="52" r="11" fill="#338fd8"/><path d="M61 48c-2-3-8-2-7 1 0 4 7 2 7 6 0 3-6 3-8 0" fill="none" stroke="#fff" stroke-width="2.200"/></svg>
  <svg class="t3" viewBox="0 0 60 60"><path d="M6 2L12-4l6 5 6-7 8 4 6-4 6 6 8-1 4 6-6 8H10z" fill="#e7e7e5"/><path d="M18 1l6 8 4-6 6 8 4-9M44 2l-6 10" fill="none" stroke="#5a5f62" stroke-width="2.600"/><path d="M4 5q26 9 52 0l-8 54q-2 5-18 5t-18-5z" fill="#dbdbd9"/><path d="M12 12l6 46M30 20l-3 40M47 12l-6 46" stroke="#efefee" stroke-width="4"/></svg>
</footer>

<svg width="0" height="0" class="defs">
  <defs>
    <linearGradient id="fb" x2="0" y2="1"><stop stop-color="#56bdf8"/><stop offset="1" stop-color="#2c62e2"/></linearGradient>
    <linearGradient id="bl" x2="0" y2="1"><stop stop-color="#46b1f1"/><stop offset="1" stop-color="#2459d4"/></linearGradient>
    <linearGradient id="gr" x2="0" y2="1"><stop stop-color="#84ee80"/><stop offset="1" stop-color="#50b843"/></linearGradient>
    <linearGradient id="ml" x2="0" y2="1"><stop stop-color="#3a70e8"/><stop offset="1" stop-color="#58c0f8"/></linearGradient>
    <linearGradient id="mu" x2="0" y2="1"><stop stop-color="#ee6478"/><stop offset="1" stop-color="#e63741"/></linearGradient>
    <linearGradient id="po" x2="0" y2="1"><stop stop-color="#b765e6"/><stop offset="1" stop-color="#6e2bab"/></linearGradient>
    <g id="code"><path d="M38 9v42L9 25l5-4 24 18z" fill="#2b79c4"/><path d="M38 9v13L14 41l-5-5z" fill="#2a66a8"/><path d="M38 9l12 5v32l-12 5z" fill="#3f98e6"/></g>
  </defs>
  <symbol id="x" viewBox="0 0 18 18"><path d="M1.500 1.500l15 15M16.500 1.500l-15 15" stroke="#1f2327" stroke-width="2.800"/></symbol>
  <symbol id="pen" viewBox="0 0 22 22"><path d="M17.200.8q.9-.9 1.800 0l2.300 2.300q.9.900 0 1.800L19.200 7 15.100 2.900zM14 4l4.100 4.100L7.600 18.600l-4.100-4.100zM2.500 15.800l3.900 3.900L0 22z" fill="currentColor"/></symbol>
</svg>
</body>
</html>
```
FILE: styles.css
```css
* { box-sizing: border-box; margin: 0; padding: 0; }
html, body { width: 2880px; height: 1800px; overflow: hidden; }
body { position: relative; display: flex; flex-direction: column; font-family: Lato, sans-serif; color: #6a6a6a; }
svg { display: block; flex: none; }
.wallpaper { position: absolute; inset: 0; width: 2880px; height: 1800px; z-index: -1; }
.defs { position: absolute; }

/* menu bar */
.menubar { height: 48px; flex: none; display: flex; align-items: center; padding: 0 37px 0 38px; font: 500 24.600px Inter, sans-serif; color: #1d1d1b; background: linear-gradient(90deg, #bfe0d8, #bcdecf 9%, #cde0bc 18%, #dbdfad 32%, #e4dc9f 44%, #e4d79a 52%, #dcd39f 62%, #c9cbb0 75%, #b8c4bd 86%, #a8bccd); }
.menubar svg { fill: #1d1d1b; }
.apple { margin-top: -6px; }
.menu { display: flex; gap: 42.900px; margin-left: 40px; line-height: 44px; padding-bottom: 2px; }
.menu b { font-weight: 700; font-size: 25.500px; }
.status { display: flex; align-items: center; margin-left: auto; line-height: 42px; }
.status svg:nth-of-type(2) { margin-left: 31px; }
.status svg:nth-of-type(3) { margin-left: 35px; }
.status svg:nth-of-type(4) { margin-left: 36px; }
.status svg:nth-of-type(5) { margin-left: 38px; }
.status svg:nth-of-type(6) { margin-left: 39px; }
.siri { width: 28px; height: 28px; border-radius: 50%; margin-left: 35px; background: radial-gradient(circle at 50% 50%, #fff 0 12%, transparent 45%), conic-gradient(#3aa088, #6ec0d0 25%, #3a7fd8 45%, #4c50b0 60%, #d04a8a 75%, #d03f6a 85%, #3aa088); }
.day, .clock { padding-bottom: 2px; }
.day { margin-left: 33px; font-size: 25px; }
.clock { margin-left: 18px; font-size: 26px; letter-spacing: .5px; }

/* browser window */
.window { height: 1638px; flex: none; display: flex; flex-direction: column; border-radius: 20px; overflow: hidden; background: #fff; box-shadow: 0 0 2px 1px rgba(10, 25, 50, .8), 0 28px 46px rgba(0, 0, 0, .62); border-top: 2px solid #e8f8fc; }
.tabstrip { height: 84px; flex: none; display: flex; align-items: flex-end; background: #c0e6f1; font: 400 23.800px Inter, sans-serif; color: #1f2327; }
.lights { display: flex; gap: 15px; width: 187px; padding-left: 42px; height: 68px; padding-top: 14px; }
.lights i { width: 25px; height: 25px; border-radius: 50%; }
.red { background: #ec6a5e; } .amber { background: #f4bf4f; } .green { background: #61c554; }
.tab { position: relative; width: 408px; height: 68px; display: flex; align-items: center; padding-left: 23px; padding-bottom: 1px; }
.tab > svg:first-child { width: 32px; margin-right: 16px; }
.tab span { width: 282px; white-space: nowrap; line-height: 34px; }
.tab .fade { letter-spacing: -.35px; -webkit-mask-image: linear-gradient(90deg, #000 84%, rgba(0, 0, 0, .15) 99%); mask-image: linear-gradient(90deg, #000 84%, rgba(0, 0, 0, .15) 99%); }
.tab .x { width: 18px; height: 18px; margin-left: 15px; }
.tab:not(.active)::after { content: ""; width: 2px; height: 40px; background: #7d9199; margin-left: auto; }
.tab:nth-child(6)::after { visibility: hidden; }
.active { background: #fff; border-radius: 18px 18px 0 0; }
.active::before, .active::after { content: ""; position: absolute; bottom: 0; width: 18px; height: 18px; }
.active::before { left: -18px; background: radial-gradient(circle at 0 0, transparent 17.500px, #fff 18px); }
.active::after { right: -18px; background: radial-gradient(circle at 100% 0, transparent 17.500px, #fff 18px); }
.plus { margin: 0 0 22px 33px; }
.more { margin: 0 33px 26px auto; }
.toolbar { height: 74px; flex: none; display: flex; align-items: center; padding: 0 39px 0 30px; border-bottom: 2px solid #cbcbcb; }
.toolbar > svg:nth-child(-n+3) { margin-right: 36px; }
.toolbar > svg:nth-child(3) { margin-right: 30px; }
.omnibox { width: 2383px; height: 56px; border-radius: 28px; background: #e1e1e1; display: flex; align-items: center; padding: 0 22px 0 27px; font: 400 27.800px Inter, sans-serif; margin-right: 30px; }
.omnibox p { margin-left: 23px; }
.host { color: #202124; letter-spacing: -.03px; } .path { color: #5f6368; }
.actions { margin-left: auto; display: flex; gap: 35.500px; align-items: center; }
.toolbar > svg:nth-child(6) { margin-left: 35px; }
.toolbar > svg:nth-child(5) { margin-left: 0; }
.avatar { width: 44px; height: 44px; border-radius: 50%; background: #1f5598; color: #fff; font: 400 24px/44px Inter, sans-serif; text-align: center; margin: 0 38px 0 28px; }

/* application */
.app { position: relative; flex: 1; background: #f7f9fb; overflow: hidden; }
.topnav { position: relative; z-index: 2; height: 109px; padding-left: 280px; display: flex; background: rgba(255, 255, 255, .98); box-shadow: 0 1px 6px rgba(0, 0, 0, .35); font-weight: 700; font-size: 27.200px; color: #6b6b6b; }
.logo { margin-top: 19px; }
.topnav nav { display: flex; margin-left: 39px; }
.topnav nav a { padding: 0 60.500px; line-height: 90px; height: 109px; letter-spacing: -.05px; }
.topnav nav .on { color: #76972c; border-bottom: 4px solid #9bc53d; letter-spacing: .05px; }
.flow { position: relative; margin: 36px 0 0 auto; }
.caret { margin: 25px 0 0 88px; }
.user { width: 138px; margin: 15px 256px 0 18px; text-align: center; line-height: 35px; }
.user b { display: block; font-weight: 700; font-size: 27px; }
.user span { font-size: 19.800px; font-weight: 700; letter-spacing: -.2px; white-space: nowrap; }
.sheet { width: 2402px; margin: -35px auto 0 239px; border: solid #d9dee3; border-width: 0 1px; box-shadow: 0 0 4px rgba(0, 0, 0, .18); background: #f7f7f7; }
.subtabs { height: 66px; display: flex; background: #ededed; font-size: 27px; letter-spacing: .5px; }
.subtabs a { padding: 14px 37.500px 0; line-height: 50px; }
.subtabs .on { background: #f9f9f9; }
.trial { height: 108px; display: flex; align-items: center; padding: 0 40px 0 40px; background: #eff7fe; border: 2px solid #bfdcf6; border-radius: 6px; font-size: 27px; letter-spacing: .36px; }
.trial b { font-size: 27.500px; color: #3c7fc0; letter-spacing: .36px; margin: -9px auto 0 0; }
.trial span { margin: -4px 31px 0 0; }
.btn { height: 64px; line-height: 60px; text-align: center; font-size: 27px; letter-spacing: .3px; border: 2px solid; border-radius: 5px; }
.blue { width: 337px; color: #fff; border-color: #5279cc; background: linear-gradient(#85a7f0, #668bde); text-shadow: 0 -2px 2px rgba(0, 0, 0, .2); }
.danger { width: 295px; color: #fff; border-color: #a63c46; background: linear-gradient(#c94e58, #b03d47); text-shadow: 0 -2px 2px rgba(0, 0, 0, .2); letter-spacing: .55px; }
.plain { width: 255px; color: #6b6b76; border-color: #c9c9c9; background: linear-gradient(#fdfdfd, #eee); letter-spacing: .4px; }
.title { height: 188px; display: flex; align-items: flex-start; padding: 24px 40px 0; background: #fff; border-bottom: 2px solid #e3e8ec; }
.title > div { margin-right: auto; padding-top: 8px; }
.title h1 { font-size: 45.500px; line-height: 50px; letter-spacing: .6px; }
.title p { font-size: 31.800px; line-height: 46px; }
.title .plain { margin-left: 20px; }
.steps { height: 276px; display: flex; gap: 16px; padding: 20px 16px; background: #f5f5f5; border-bottom: 2px solid #e8e8e8; }
.step { flex: 1 1 0; height: 234px; background: #eaeaea; text-align: center; }
.step h3 { height: 110px; display: flex; flex-direction: column; justify-content: center; background: #c4c4c4; font-size: 32px; line-height: 42px; }
.step small { display: block; font-size: 25px; letter-spacing: -.05px; padding-top: 2px; margin-bottom: -2px; }
.step p { padding-top: 19px; font-size: 27px; line-height: 42px; letter-spacing: .45px; white-space: nowrap; }
.step.done { background: #ededed; color: #979797; } .step.done h3 { background: #e7e7e7; }
.now h3 { background: #b295c2; color: #fff; }
.content { display: flex; gap: 40px; padding: 30px 30px 0; height: 800px; }
h2 { font-size: 31.500px; font-weight: 700; letter-spacing: .42px; color: #4c4c4c; line-height: 44px; height: 46px; border-bottom: 2px solid #e7e7e7; white-space: nowrap; }
aside { width: 564px; }
.photo { height: 534px; background: #fff; border: 2px solid #e6e6e6; display: flex; align-items: center; justify-content: center; padding-top: 6px; }
.address { padding: 24px 10px; }
.lines { display: flex; justify-content: space-between; padding: 24px 9px 0 10px; font-size: 30.500px; line-height: 48px; letter-spacing: .5px; }
.lines svg { margin-top: 6px; }
.panel { width: 1736px; background: #fff; border: 2px solid #e6e6e6; padding: 20px; }
.pen { display: inline-block; width: 22px; height: 22px; color: #444; }
.mid, .soft { color: #6b6b6b; }
.cols { display: grid; grid-template-columns: 340px 841px 1fr; height: 504px; }
.when h2 { margin: 24px 0 0 10px; width: 300px; }
.when h2, .who h2, .ref { display: flex; align-items: center; }
h2 .pen, .ref .pen { margin-left: auto; }
.when h2 .pen { margin-right: 18px; }
.date { margin-left: 10px; width: 300px; padding-top: 22px; display: flex; flex-direction: column; align-items: center; color: #404145; text-align: center; }
.wd { font-size: 30px; line-height: 36px; letter-spacing: 6.700px; }
.dd { position: relative; left: -5px; font-family: Inter, sans-serif; font-weight: 700; font-size: 141px; line-height: 108px; height: 116px; }
.dd sup { position: absolute; left: 92px; top: 0; font-family: Lato, sans-serif; font-weight: 400; font-size: 29px; line-height: 26px; }
.mm { font-weight: 700; font-size: 31px; line-height: 32px; letter-spacing: 6.300px; }
.tt { font-size: 46px; line-height: 60px; padding-top: 5px; }
.auto { display: flex; align-items: center; margin-top: 39px; color: #404145; font-weight: 700; font-size: 23px; line-height: 24px; text-align: center; }
.auto p { width: 250px; letter-spacing: .2px; }
.check { width: 26px; height: 26px; border-radius: 4px; background: #2f6ff2; }
.auto .pen { margin-left: 11px; }
.what { border-right: 2px solid #e7e7e7; }
.ref { height: 94px; border-bottom: 2px solid #e7e7e7; padding: 0 29px 0 10px; }
.ref h2 { border: 0; width: 205px; height: 44px; }
.ref p, .who p, .notes p { font-size: 27.500px; letter-spacing: .24px; line-height: 36px; }
.inner { padding: 24px 10px 0; }
.para { color: #404145; font-size: 27.500px; line-height: 44px; padding: 15px 0 37px 10px; letter-spacing: .05px; white-space: nowrap; }
.para b { font-size: 28px; letter-spacing: .18px; margin-left: 7px; }
.para .apr { letter-spacing: -.05px; }
.para a { color: #84a5ee; margin-left: 49px; position: relative; top: 2px; }
.people { padding: 24px 10px; font-size: 31px; line-height: 52px; letter-spacing: .5px; color: #404145; }
.people p { display: flex; align-items: center; gap: 8px; }
.people .as { letter-spacing: .9px; }
.people .pen { margin-left: 14px; }
.who { padding: 24px 30px 0; }
.who .cl { line-height: 44px; height: 50px; padding-bottom: 4px; }
.who h2 .pen { margin-right: 18px; }
.who p { margin-left: -11px; }
.cp { padding: 30px 0 56px; height: 122px; }
.kp { padding-top: 46px; }
.notes { border-top: 2px solid #e7e7e7; margin-top: 20px; padding: 44px 10px 0; }
.notes p { padding: 20px 0 0 8px; }
.shade { position: absolute; left: 0; right: 0; bottom: 0; height: 90px; background: linear-gradient(transparent, rgba(0, 0, 0, .03) 45%, rgba(0, 0, 0, .11)); -webkit-mask-image: linear-gradient(90deg, transparent, #000 10%, #000 90%, transparent); mask-image: linear-gradient(90deg, transparent, #000 10%, #000 90%, transparent); }
.chat { position: absolute; right: 40px; bottom: 120px; width: 96px; height: 96px; border-radius: 50%; background: #8cc05d; display: flex; align-items: center; justify-content: center; box-shadow: 0 4px 12px rgba(0, 0, 0, .12), 0 8px 60px rgba(0, 0, 0, .14); }

/* dock */
.dock { position: relative; width: 2760px; height: 96px; flex: none; margin: 8px 0 0 60px; padding: 13px 0 0 13px; display: flex; gap: 18.750px; border: 2px solid rgba(255, 255, 255, .22); border-radius: 34px; background: linear-gradient(90deg, #7093c8, #7099cf 14%, #8a9bb5 17%, #c9957c 19.500%, #e29360 22%, #e8a15a 29%, #e98559 36%, #e89c58 45%, #ed8359 55%, #f07c5b 66%, #ec8658 70%, #ec9858 77%, #ee8a5a 86%, #e77e55); background-origin: border-box; }
.dock > svg { width: 60px; height: 60px; overflow: visible; filter: drop-shadow(0 1px 1px rgba(0, 0, 0, .3)); }
.dock .thumb { width: 70px; margin-left: -6.700px; }
.dock .t2 { margin-left: -10.700px; }
.dock .t3 { margin-left: -6.700px; }
.dock > .run { height: 77px; margin-bottom: -17px; padding-bottom: 17px; background: radial-gradient(circle at 29px 73px, #761408 3.700px, transparent 4.300px); }
.dock > .run:first-child { background: radial-gradient(circle at 29px 73px, #0b1d4e 3.700px, transparent 4.300px); }
.sep { width: 2px; height: 72px; margin-top: -3px; background: #c06030; flex: none; }
.s1 { margin-left: 10.300px; margin-right: 4.300px; }
.s2 { margin-left: 8.300px; margin-right: 9.300px; }
.cal1 { font: 600 12.500px Inter, sans-serif; fill: #fff; text-anchor: middle; }
.cal2 { font: 300 36px Inter, sans-serif; fill: #222; text-anchor: middle; letter-spacing: -1px; }
.tv { font: 500 25px Inter, sans-serif; fill: #fff; text-anchor: middle; }
```
